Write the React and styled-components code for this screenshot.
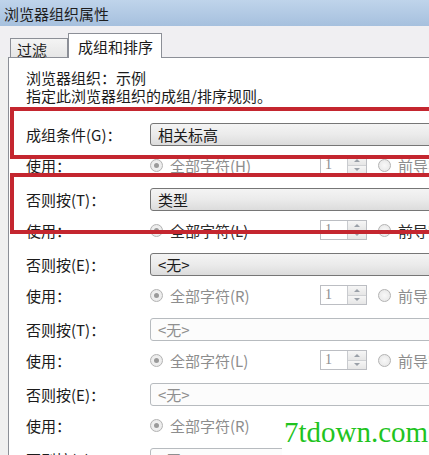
import React from "react";
import styled, { createGlobalStyle } from "styled-components";

const GlobalStyle = createGlobalStyle`
  html, body {
    margin: 0;
    padding: 0;
    width: 429px;
    height: 455px;
    overflow: hidden;
    background: #f0f0f0;
  }
  body {
    font-family: "Noto Sans CJK SC", "Liberation Sans", sans-serif;
    font-size: 15px;
    color: #1b1b1b;
  }
`;

const Window = styled.div`
  position: relative;
  width: 429px;
  height: 455px;
  overflow: hidden;
  display: flex;
  flex-direction: column;
`;

const TitleBar = styled.div`
  height: 26px;
  flex: none;
  display: flex;
  align-items: center;
  padding-left: 4px;
  background: linear-gradient(#bfd4eb, #a6c0de);
  font-size: 15px;
  color: #1e1e1e;
`;

const TabStrip = styled.div`
  height: 31px;
  flex: none;
  display: flex;
  align-items: flex-end;
  padding-left: 10px;
  background: #f0eff2;
`;

const Tab = styled.div`
  height: ${(p) => (p.active ? "25px" : "19px")};
  padding: ${(p) => (p.active ? "0 8px 0 9px" : "0 20px 0 6px")};
  display: flex;
  align-items: center;
  box-sizing: border-box;
  border: 1px solid #8c8f97;
  border-bottom: none;
  border-left: ${(p) => (p.active ? "1px solid #8c8f97" : "1px solid #8c8f97")};
  margin-bottom: ${(p) => (p.active ? "-1px" : "0")};
  background: ${(p) => (p.active ? "#fff" : "linear-gradient(#f4f4f4, #e6e6e6)")};
  position: relative;
  z-index: ${(p) => (p.active ? 1 : 0)};
  line-height: 1;
  padding-top: ${(p) => (p.active ? "0" : "3px")};
`;

const Panel = styled.div`
  flex: 1;
  margin-left: 8px;
  background: #fff;
  border-top: 1px solid #8c8f97;
  border-left: 1px solid #8c8f97;
  padding: 11px 0 0 17px;
  overflow: hidden;
`;

const Desc = styled.div`
  line-height: 18px;
  margin-bottom: 12px;
`;

const Row = styled.div`
  display: flex;
  align-items: center;
  height: ${(p) => (p.use ? "31px" : "34px")};
  padding-bottom: ${(p) => (p.use ? "3px" : "0")};
  box-sizing: border-box;
  white-space: nowrap;
`;

const Label = styled.div`
  width: 124px;
  flex: none;
`;

const Select = styled.div`
  width: 300px;
  height: 23px;
  flex: none;
  box-sizing: border-box;
  border: 1px solid ${(p) => (p.disabled ? "#b7bbbf" : "#767676")};
  border-radius: 3px;
  background: ${(p) =>
    p.disabled ? "#fcfcfc" : "linear-gradient(#f4f4f4 0%, #ebebeb 50%, #dcdcdc 100%)"};
  color: ${(p) => (p.disabled ? "#8f8f8f" : "#1b1b1b")};
  display: flex;
  align-items: center;
  padding-left: 7px;
`;

const Radio = styled.span`
  width: 13px;
  height: 13px;
  flex: none;
  box-sizing: border-box;
  border-radius: 50%;
  border: 1px solid #b3b3b3;
  background: radial-gradient(circle, #f8f8f8, #e4e4e4);
  display: flex;
  align-items: center;
  justify-content: center;
  margin-right: 7px;
  &::after {
    content: "";
    display: ${(p) => (p.checked ? "block" : "none")};
    width: 5px;
    height: 5px;
    border-radius: 50%;
    background: #9a9a9a;
  }
`;

const RadioText = styled.span`
  color: ${(p) => (p.enabled ? "#2a2a2a" : "#8d8d8d")};
`;

const AllChars = styled.div`
  width: 170px;
  flex: none;
  display: flex;
  align-items: center;
`;

const Spinner = styled.div`
  width: 47px;
  height: 20px;
  flex: none;
  box-sizing: border-box;
  border: 1px solid #bcbec3;
  background: #fff;
  display: flex;
  margin-right: 11px;
`;

const SpinValue = styled.div`
  flex: 1;
  color: #8d8d8d;
  font-family: "Liberation Serif", serif;
  font-size: 14px;
  padding-left: 4px;
  line-height: 18px;
`;

const SpinButtons = styled.div`
  width: 18px;
  display: flex;
  flex-direction: column;
  border-left: 1px solid #c9cbcf;
`;

const SpinBtn = styled.div`
  flex: 1;
  background: linear-gradient(#f6f6f6, #e6e6e6);
  border-bottom: ${(p) => (p.top ? "1px solid #cfd1d4" : "none")};
  display: flex;
  align-items: center;
  justify-content: center;
  &::after {
    content: "";
    width: 0;
    height: 0;
    border-left: 3px solid transparent;
    border-right: 3px solid transparent;
    ${(p) =>
      p.top ? "border-bottom: 3px solid #9aa0a8;" : "border-top: 3px solid #9aa0a8;"}
  }
`;

const Frame = styled.div`
  position: absolute;
  left: 10px;
  right: -10px;
  top: ${(p) => p.top}px;
  height: ${(p) => p.height}px;
  border: 4px solid #c4262f;
  box-sizing: border-box;
  pointer-events: none;
`;

const Watermark = styled.div`
  position: absolute;
  right: 0;
  top: 412px;
  width: 147px;
  height: 43px;
  background: #fff;
  color: #1fc41f;
  font-family: "Liberation Serif", serif;
  font-size: 29px;
  line-height: 40px;
  padding-left: 2px;
  box-sizing: border-box;
`;

const groups = [
  { label: "成组条件(G)：", value: "相关标高", key: "H", disabled: false, enabled: false },
  { label: "否则按(T)：", value: "类型", key: "L", disabled: false, enabled: true },
  { label: "否则按(E)：", value: "<无>", key: "R", disabled: false, enabled: false },
  { label: "否则按(T)：", value: "<无>", key: "L", disabled: true, enabled: false },
  { label: "否则按(E)：", value: "<无>", key: "R", disabled: true, enabled: false },
  { label: "否则按(T)：", value: "<无>", key: "L", disabled: true, enabled: false },
];

const App = () => {
  return (
    <Window>
      <GlobalStyle />
      <TitleBar>浏览器组织属性</TitleBar>
      <TabStrip>
        <Tab>过滤</Tab>
        <Tab active>成组和排序</Tab>
      </TabStrip>
      <Panel>
        <Desc>
          浏览器组织：示例
          <br />
          指定此浏览器组织的成组/排序规则。
        </Desc>
        {groups.map((g, i) => (
          <React.Fragment key={i}>
            <Row>
              <Label>{g.label}</Label>
              <Select disabled={g.disabled}>{g.value}</Select>
            </Row>
            <Row use>
              <Label>使用：</Label>
              <AllChars>
                <Radio checked />
                <RadioText enabled={g.enabled}>全部字符({g.key})</RadioText>
              </AllChars>
              <Spinner>
                <SpinValue>1</SpinValue>
                <SpinButtons>
                  <SpinBtn top />
                  <SpinBtn />
                </SpinButtons>
              </Spinner>
              <Radio />
              <RadioText enabled={g.enabled}>前导字符</RadioText>
            </Row>
          </React.Fragment>
        ))}
      </Panel>
      <Frame top={107} height={52} />
      <Frame top={173} height={61} />
      <Watermark>7tdown.com</Watermark>
    </Window>
  );
};

export default App;
